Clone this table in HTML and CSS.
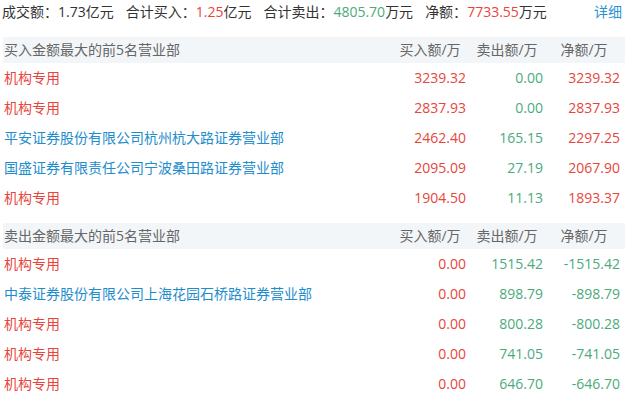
FILE: index.html
```html
<!DOCTYPE html>
<html lang="zh-CN">
<head>
<meta charset="utf-8">
<title>龙虎榜</title>
<link rel="stylesheet" href="styles.css">
</head>
<body>
<div class="summary">
  <span class="item">成交额：1.73亿元</span>
  <span class="item">合计买入：<span class="up">1.25</span>亿元</span>
  <span class="item">合计卖出：<span class="down">4805.70</span>万元</span>
  <span class="item">净额：<span class="up">7733.55</span>万元</span>
  <a class="more" href="#">详细</a>
</div>

<div class="table">
  <div class="row head">
    <div class="name">买入金额最大的前5名营业部</div>
    <div class="num">买入额/万</div>
    <div class="num">卖出额/万</div>
    <div class="num">净额/万</div>
  </div>
  <div class="row"><div class="name up">机构专用</div><div class="num up">3239.32</div><div class="num down">0.00</div><div class="num up">3239.32</div></div>
  <div class="row"><div class="name up">机构专用</div><div class="num up">2837.93</div><div class="num down">0.00</div><div class="num up">2837.93</div></div>
  <div class="row"><div class="name link">平安证券股份有限公司杭州杭大路证券营业部</div><div class="num up">2462.40</div><div class="num down">165.15</div><div class="num up">2297.25</div></div>
  <div class="row"><div class="name link">国盛证券有限责任公司宁波桑田路证券营业部</div><div class="num up">2095.09</div><div class="num down">27.19</div><div class="num up">2067.90</div></div>
  <div class="row"><div class="name up">机构专用</div><div class="num up">1904.50</div><div class="num down">11.13</div><div class="num up">1893.37</div></div>
</div>

<div class="table second">
  <div class="row head">
    <div class="name">卖出金额最大的前5名营业部</div>
    <div class="num">买入额/万</div>
    <div class="num">卖出额/万</div>
    <div class="num">净额/万</div>
  </div>
  <div class="row"><div class="name up">机构专用</div><div class="num up">0.00</div><div class="num down">1515.42</div><div class="num down">-1515.42</div></div>
  <div class="row"><div class="name link">中泰证券股份有限公司上海花园石桥路证券营业部</div><div class="num up">0.00</div><div class="num down">898.79</div><div class="num down">-898.79</div></div>
  <div class="row"><div class="name up">机构专用</div><div class="num up">0.00</div><div class="num down">800.28</div><div class="num down">-800.28</div></div>
  <div class="row"><div class="name up">机构专用</div><div class="num up">0.00</div><div class="num down">741.05</div><div class="num down">-741.05</div></div>
  <div class="row"><div class="name up">机构专用</div><div class="num up">0.00</div><div class="num down">646.70</div><div class="num down">-646.70</div></div>
</div>
</body>
</html>
```

FILE: styles.css
```css
html, body {
  margin: 0;
  padding: 0;
  background: #fff;
}
body {
  font-family: "Open Sans", "Noto Sans CJK SC", sans-serif;
  font-size: 14px;
  color: #333;
  width: 625px;
  overflow: hidden;
}
.summary {
  display: flex;
  align-items: center;
  height: 24px;
  line-height: 24px;
  padding: 0 3px 0 2px;
  margin-bottom: 13px;
  white-space: nowrap;
}
.summary .item {
  margin-right: 12px;
}
.summary .more {
  margin-left: auto;
  color: #2a93d5;
  text-decoration: none;
}
.up { color: #e8453c; }
.down { color: #4caa7c; }
.link { color: #1e8dcc; }
.table {
  margin-left: 3px;
}
.table.second {
  margin-top: 10px;
}
.row {
  display: flex;
  height: 30px;
  line-height: 30px;
  white-space: nowrap;
}
.row.head {
  height: 26px;
  line-height: 26px;
  background: #f3f6f9;
  color: #666;
}
.name {
  flex: 1;
  padding-left: 1px;
}
.num {
  width: 77px;
  padding-right: 5px;
  box-sizing: border-box;
  text-align: right;
}
.head .num {
  text-align: center;
}
```
